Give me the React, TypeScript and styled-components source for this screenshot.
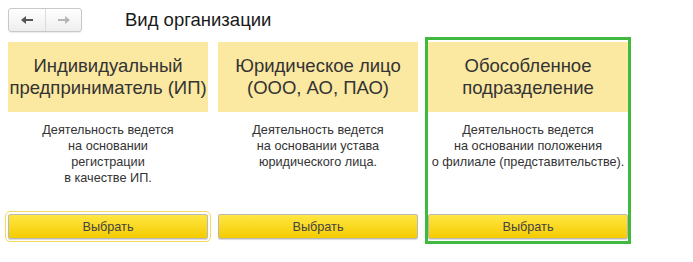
import styled, { createGlobalStyle } from "styled-components";

const GlobalStyle = createGlobalStyle`
    html, body {
        margin: 0;
        padding: 0;
        background: #ffffff;
    }
    body {
        font-family: "Liberation Sans", Arial, sans-serif;
        color: #333333;
    }
`

const Page = styled.div`
    display: flex;
    flex-direction: column;
    gap: 5px;
    padding: 8px 0 0 5px;
`

const TopBar = styled.div`
    display: flex;
    align-items: center;
    padding-left: 3px;
    height: 24px;
`

const NavGroup = styled.div`
    display: flex;
    height: 24px;
    border: 1px solid #c8c8c8;
    border-radius: 3px;
    box-sizing: border-box;
    background: linear-gradient(#ffffff, #eeeeee);
    box-shadow: 0 1px 1px rgba(0, 0, 0, 0.08);
    overflow: hidden;
`

const NavButton = styled.button<{ $divider?: boolean }>`
    width: 36px;
    height: 100%;
    padding: 0;
    border: none;
    border-left: ${p => (p.$divider ? "1px solid #dcdcdc" : "none")};
    background: transparent;
    display: flex;
    align-items: center;
    justify-content: center;
    cursor: pointer;
`

const Title = styled.h1`
    margin: 0 0 0 43px;
    font-size: 18.5px;
    font-weight: 400;
    color: #1a1a1a;
    line-height: 1;
`

const CardRow = styled.div`
    display: flex;
    gap: 4px;
`

const Card = styled.div<{ $selected?: boolean }>`
    display: flex;
    flex-direction: column;
    width: 200px;
    height: 199px;
    padding-top: 2px;
    box-sizing: content-box;
    border: 3px solid ${p => (p.$selected ? "#3fba3f" : "transparent")};
`

const CardHeader = styled.div`
    height: 70px;
    flex-shrink: 0;
    background: #fbe8a1;
    display: flex;
    flex-direction: column;
    align-items: center;
    justify-content: center;
    text-align: center;
    white-space: nowrap;
    font-size: 18.5px;
    line-height: 22px;
    color: #333333;
`

const Description = styled.div`
    margin-top: 10px;
    text-align: center;
    font-size: 12.7px;
    line-height: 16px;
    color: #333333;
`

const ChooseButton = styled.button<{ $focused?: boolean }>`
    margin-top: auto;
    margin-bottom: 2px;
    height: 25px;
    width: 100%;
    border: 1px solid #b9b9b9;
    border-radius: 2px;
    background: linear-gradient(#ffe644, #f5cc00);
    box-shadow: 0 1px 1px rgba(0, 0, 0, 0.15);
    font-family: "Liberation Sans", Arial, sans-serif;
    font-size: 12.7px;
    color: #444444;
    cursor: pointer;
    outline: ${p => (p.$focused ? "1px solid #f5d85e" : "none")};
    outline-offset: 2px;
`

function Arrow({ dir, color }: { dir: "left" | "right"; color: string }) {
    return (
        <svg width="12" height="8" viewBox="0 0 12 8">
            <g transform={dir === "right" ? "translate(12 0) scale(-1 1)" : undefined}>
                <path d="M0 4 L5 0 L5 3 L12 3 L12 5 L5 5 L5 8 Z" fill={color} />
            </g>
        </svg>
    )
}

const cards = [
    {
        title: ["Индивидуальный", "предприниматель (ИП)"],
        text: ["Деятельность ведется", "на основании", "регистрации", "в качестве ИП."],
        focused: true,
    },
    {
        title: ["Юридическое лицо", "(ООО, АО, ПАО)"],
        text: ["Деятельность ведется", "на основании устава", "юридического лица."],
    },
    {
        title: ["Обособленное", "подразделение"],
        text: ["Деятельность ведется", "на основании положения", "о филиале (представительстве)."],
        selected: true,
    },
]

export default function App() {
    return (
        <>
            <GlobalStyle />
            <Page>
                <TopBar>
                    <NavGroup>
                        <NavButton><Arrow dir="left" color="#555555" /></NavButton>
                        <NavButton $divider><Arrow dir="right" color="#b5b5b5" /></NavButton>
                    </NavGroup>
                    <Title>Вид организации</Title>
                </TopBar>
                <CardRow>
                    {cards.map((c, i) => (
                        <Card key={i} $selected={c.selected}>
                            <CardHeader>
                                {c.title.map((t, j) => <div key={j}>{t}</div>)}
                            </CardHeader>
                            <Description>
                                {c.text.map((t, j) => <div key={j}>{t}</div>)}
                            </Description>
                            <ChooseButton $focused={c.focused}>Выбрать</ChooseButton>
                        </Card>
                    ))}
                </CardRow>
            </Page>
        </>
    )
}
